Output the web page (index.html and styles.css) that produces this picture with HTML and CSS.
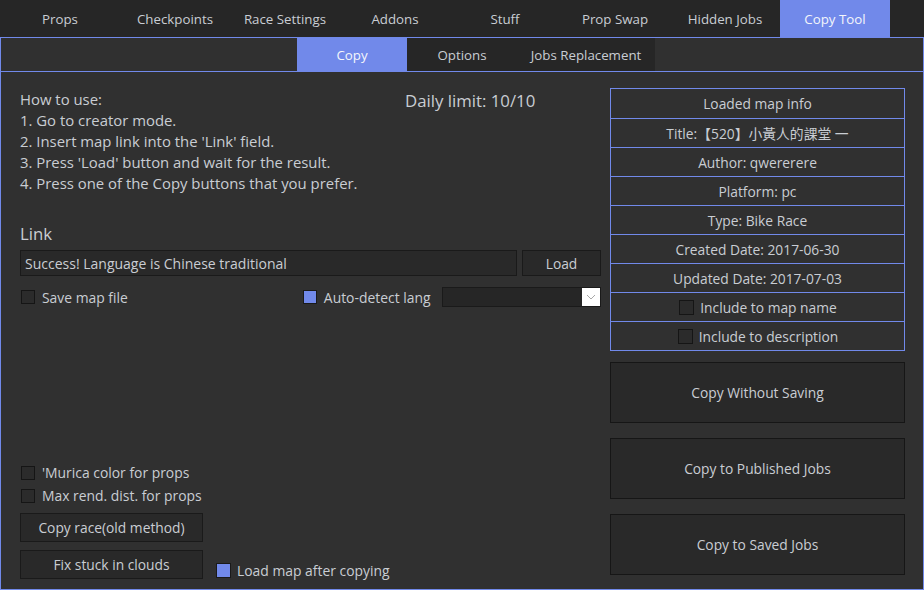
FILE: index.html
```html
<!DOCTYPE html>
<html>
<head>
<meta charset="utf-8">
<link rel="stylesheet" href="styles.css">
</head>
<body>
<div class="topnav">
  <div class="tab first">Props</div>
  <div class="tab">Checkpoints</div>
  <div class="tab">Race Settings</div>
  <div class="tab">Addons</div>
  <div class="tab">Stuff</div>
  <div class="tab">Prop Swap</div>
  <div class="tab">Hidden Jobs</div>
  <div class="tab active">Copy Tool</div>
</div>
<div class="panel">
  <div class="subnav">
    <div class="subtab active">Copy</div>
    <div class="subtab">Options</div>
    <div class="subtab wide">Jobs Replacement</div>
  </div>
  <div class="content">
    <div class="left">
      <div class="intro">
        <div class="howto">How to use:<br>1. Go to creator mode.<br>2. Insert map link into the 'Link' field.<br>3. Press 'Load' button and wait for the result.<br>4. Press one of the Copy buttons that you prefer.</div>
        <div class="limit">Daily limit: 10/10</div>
      </div>
      <div class="link-label">Link</div>
      <div class="link-row">
        <div class="input">Success! Language is Chinese traditional</div>
        <div class="btn load">Load</div>
      </div>
      <div class="opt-row">
        <label class="check"><span class="box"></span>Save map file</label>
        <label class="check auto"><span class="box on"></span>Auto-detect lang</label>
        <div class="select"><span class="arrow"><svg width="10" height="6" viewBox="0 0 10 6"><path d="M1 1 L5 5 L9 1" fill="none" stroke="#a8a8a8" stroke-width="1"/></svg></span></div>
      </div>
      <div class="bottom">
        <label class="check"><span class="box"></span>'Murica color for props</label>
        <label class="check second"><span class="box"></span>Max rend. dist. for props</label>
        <div class="btn small race">Copy race(old method)</div>
        <div class="fix-row">
          <div class="btn small">Fix stuck in clouds</div>
          <label class="check after"><span class="box on"></span>Load map after copying</label>
        </div>
      </div>
    </div>
    <div class="right">
      <div class="info">
        <div class="row">Loaded map info</div>
        <div class="row">Title:【520】小黃人的課堂 一</div>
        <div class="row">Author: qwererere</div>
        <div class="row">Platform: pc</div>
        <div class="row">Type: Bike Race</div>
        <div class="row">Created Date: 2017-06-30</div>
        <div class="row">Updated Date: 2017-07-03</div>
        <div class="row"><label class="check"><span class="box"></span>Include to map name</label></div>
        <div class="row"><label class="check"><span class="box"></span>Include to description</label></div>
      </div>
      <div class="bigbtn first">Copy Without Saving</div>
      <div class="bigbtn">Copy to Published Jobs</div>
      <div class="bigbtn">Copy to Saved Jobs</div>
    </div>
  </div>
</div>
</body>
</html>
```
FILE: styles.css
```css
* { box-sizing: border-box; }
html, body { margin: 0; padding: 0; }
body {
  width: 924px;
  height: 590px;
  background: #303030;
  font-family: "Open Sans", "Noto Sans CJK TC", sans-serif;
  color: #c9cdd3;
  font-size: 13.8px;
  overflow: hidden;
}
.topnav {
  display: flex;
  height: 37px;
  background: #262626;
}
.tab {
  width: 110px;
  display: flex;
  align-items: center;
  justify-content: center;
  font-size: 13.3px;
}
.tab.first { width: 120px; }
.tab.active { background: #7189ea; color: #f4f6fb; }
.panel {
  height: 553px;
  border: 1px solid #7189ea;
  display: flex;
  flex-direction: column;
}
.subnav {
  display: flex;
  height: 34px;
  padding-left: 296px;
  border-bottom: 1px solid #7189ea;
}
.subtab {
  width: 110px;
  background: #262626;
  display: flex;
  align-items: center;
  justify-content: center;
  font-size: 13.3px;
}
.subtab.wide { width: 138px; }
.subtab.active { background: #7189ea; color: #f4f6fb; }
.content {
  flex: 1;
  display: flex;
  padding: 17px 18px 10px 19px;
  gap: 9px;
}
.left {
  width: 581px;
  display: flex;
  flex-direction: column;
}
.intro { display: flex; }
.howto {
  width: 385px;
  font-size: 14.9px;
  line-height: 21px;
}
.limit {
  font-size: 16.8px;
  line-height: 21px;
  padding-top: 1px;
}
.link-label {
  margin-top: 29px;
  font-size: 16.8px;
  line-height: 22px;
}
.link-row {
  display: flex;
  gap: 5px;
  margin-top: 5px;
  height: 26px;
}
.input {
  width: 497px;
  background: #292929;
  border: 1px solid #1a1a1a;
  padding-left: 4px;
  display: flex;
  align-items: center;
  font-size: 14px;
}
.btn {
  background: #292929;
  border: 1px solid #1a1a1a;
  display: flex;
  align-items: center;
  justify-content: center;
  font-size: 13.8px;
}
.load { width: 79px; }
.opt-row {
  display: flex;
  align-items: center;
  margin-top: 11px;
  height: 20px;
}
.check {
  display: flex;
  align-items: center;
  gap: 7px;
  font-size: 13.9px;
  line-height: 15px;
  padding-left: 1px;
}
.box {
  width: 14px;
  height: 14px;
  background: #2b2b2b;
  border: 1px solid #151515;
  flex: none;
}
.box.on { background: #7189ea; border-color: #1a1a1a; }
.check.auto { margin-left: 174px; }
.select {
  margin-left: auto;
  width: 159px;
  height: 20px;
  background: #262626;
  border: 1px solid #1a1a1a;
  display: flex;
  justify-content: flex-end;
}
.arrow {
  width: 18px;
  background: #ffffff;
  display: flex;
  align-items: center;
  justify-content: center;
}
.bottom {
  margin-top: auto;
  display: flex;
  flex-direction: column;
}
.check.second { margin-top: 8px; }
.btn.small { width: 183px; height: 29px; }
.race { margin-top: 10px; }
.fix-row {
  display: flex;
  align-items: flex-end;
  margin-top: 8px;
}
.check.after { margin-left: 13px; padding-left: 0; gap: 6px; margin-bottom: 1px; }
.check.after .box { width: 15px; height: 15px; }
.right {
  width: 295px;
  display: flex;
  flex-direction: column;
  margin-top: -1px;
}
.info {
  border: 1px solid #7189ea;
  margin-bottom: 11px;
}
.row {
  height: 29px;
  border-top: 1px solid #7189ea;
  display: flex;
  align-items: center;
  justify-content: center;
  font-size: 13.8px;
}
.row:first-child { border-top: none; height: 29px; }
.row .check { gap: 6px; font-size: 13.8px; }
.row .box { width: 15px; height: 15px; }
.bigbtn {
  height: 61px;
  background: #292929;
  border: 1px solid #161616;
  display: flex;
  align-items: center;
  justify-content: center;
  font-size: 13.8px;
  margin-top: 15px;
}
.bigbtn.first { margin-top: 0; }
```
